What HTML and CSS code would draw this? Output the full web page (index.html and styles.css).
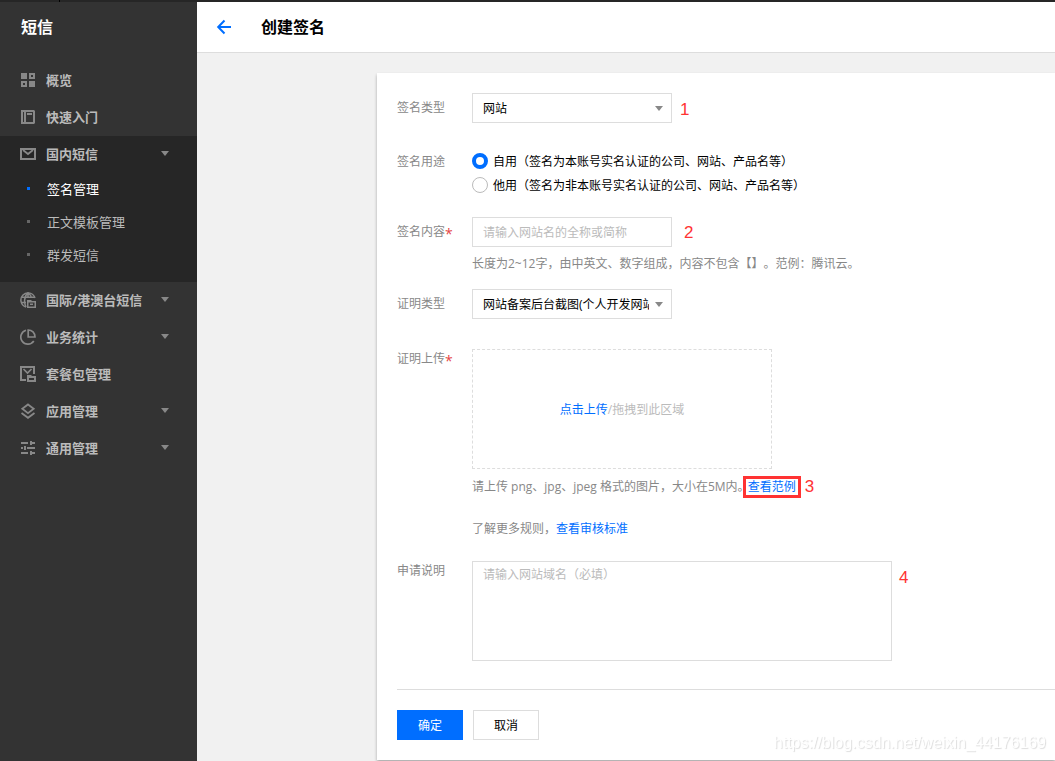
FILE: index.html
```html
<!DOCTYPE html>
<html lang="zh-CN">
<head>
<meta charset="utf-8">
<meta name="viewport" content="width=device-width, initial-scale=1">
<title>创建签名 - 短信</title>
<link rel="stylesheet" href="styles.css">
</head>
<body>
<div class="topbar"></div>
<div class="layout">
  <aside class="sidebar">
    <h2 class="sidebar-title">短信</h2>
    <nav>
      <ul class="menu">
        <li><a class="menu-item" href="#">
          <svg class="menu-icon" viewBox="0 0 16 16"><path fill="currentColor" fill-rule="evenodd" d="M1 1h6v6H1zM9 1h6v6H9zm2 2v2h2V3zM1 9h6v6H1zm2 2v2h2v-2zM9 9h6v6H9z"/></svg>
          <span class="menu-text">概览</span></a></li>
        <li><a class="menu-item" href="#">
          <svg class="menu-icon" viewBox="0 0 16 16"><path fill="currentColor" fill-rule="evenodd" d="M1 1h13l1 1v12l-1 1H1zM3 3v10h1V3zm3 0v10h7V3zM7 4h5v2H7z"/></svg>
          <span class="menu-text">快速入门</span></a></li>
        <li class="menu-group">
          <a class="menu-item" href="#">
            <svg class="menu-icon" viewBox="0 0 16 16"><path fill="currentColor" fill-rule="evenodd" d="M0 2h16v12H0zM2 4v8h12V4z"/><path d="M3 4l5 4 5-4" fill="none" stroke="currentColor" stroke-width="1.8"/></svg>
            <span class="menu-text">国内短信</span>
            <svg class="caret" viewBox="0 0 8 5"><path fill="currentColor" d="M0 0h8L4 5z"/></svg></a>
          <ul class="submenu">
            <li><a class="submenu-item active" href="#">签名管理</a></li>
            <li><a class="submenu-item" href="#">正文模板管理</a></li>
            <li><a class="submenu-item" href="#">群发短信</a></li>
          </ul>
        </li>
        <li><a class="menu-item" href="#">
          <svg class="menu-icon" viewBox="0 0 16 16"><g fill="none" stroke="currentColor" stroke-width="1.5"><path d="M15 6A7.200 7.200 0 1 0 6 15"/><path d="M6 15C3.800 11 4 4 8 .8c2 1.400 3 3 3.400 5M1.500 5.200h13M1 10.500h5M8 1v5"/></g><path fill="currentColor" fill-rule="evenodd" d="M7 8h4l1 1h4v7H7zM8.500 10.500v4h6v-4zM10 11.500h3V13h-3z"/></svg>
          <span class="menu-text">国际/港澳台短信</span>
          <svg class="caret" viewBox="0 0 8 5"><path fill="currentColor" d="M0 0h8L4 5z"/></svg></a></li>
        <li><a class="menu-item" href="#">
          <svg class="menu-icon" viewBox="0 0 16 16"><g fill="none" stroke="currentColor" stroke-width="1.7"><path d="M6 1.200A7.100 7.100 0 1 0 13.800 12"/><path d="M8.200 1v7h6.800C15 3.800 12 1 8.200 1z"/></g></svg>
          <span class="menu-text">业务统计</span>
          <svg class="caret" viewBox="0 0 8 5"><path fill="currentColor" d="M0 0h8L4 5z"/></svg></a></li>
        <li><a class="menu-item" href="#">
          <svg class="menu-icon" viewBox="0 0 16 16"><path fill="currentColor" fill-rule="evenodd" d="M0 0h15v8h-2V2H2v11h4v2H0zM7 9h4l1 1h4v6H7zM9 12v2h5v-2z"/><path d="M3.500 3l4 4 4-4" fill="none" stroke="currentColor" stroke-width="1.700"/></svg>
          <span class="menu-text">套餐包管理</span></a></li>
        <li><a class="menu-item" href="#">
          <svg class="menu-icon" viewBox="0 0 16 16"><g fill="none" stroke="currentColor" stroke-width="1.800"><path d="M8 1.500l5.700 4.300L8 10.200 2.300 5.800z"/><path d="M1.500 10L8 14.800l6.500-4.800"/></g></svg>
          <span class="menu-text">应用管理</span>
          <svg class="caret" viewBox="0 0 8 5"><path fill="currentColor" d="M0 0h8L4 5z"/></svg></a></li>
        <li><a class="menu-item" href="#">
          <svg class="menu-icon" viewBox="0 0 16 16"><path fill="currentColor" d="M1 2h7v2H1zM10 1h2v1h3v2h-3v1h-2zM1 7h2v2H1zM4 6h2v4H4zM7 7h8v2H7zM1 12h7v2H1zM10 11h2v1h3v2h-3v1h-2z"/></svg>
          <span class="menu-text">通用管理</span>
          <svg class="caret" viewBox="0 0 8 5"><path fill="currentColor" d="M0 0h8L4 5z"/></svg></a></li>
      </ul>
    </nav>
  </aside>

  <main class="main">
    <header class="page-header">
      <a class="back" href="#" aria-label="返回"><svg viewBox="0 0 16 16"><path d="M8.500 1.500L2.200 8l6.300 6.500M2 8h13" fill="none" stroke="currentColor" stroke-width="2"/></svg></a>
      <h1 class="page-title">创建签名</h1>
    </header>

    <form class="card">
      <div class="row row-type">
        <label class="label" for="sign-type">签名类型</label>
        <div class="inline">
          <div class="select-wrap">
            <select class="control" id="sign-type"><option>网站</option></select>
            <svg class="caret" viewBox="0 0 8 5"><path fill="currentColor" d="M0 0h8L4 5z"/></svg>
          </div>
          <span class="mark mark-type">1</span>
        </div>
      </div>

      <div class="row row-usage" role="radiogroup" aria-labelledby="usage-label">
        <span class="label" id="usage-label">签名用途</span>
        <div class="radios">
          <label class="radio"><input type="radio" name="usage" checked>自用（签名为本账号实名认证的公司、网站、产品名等）</label>
          <label class="radio"><input type="radio" name="usage">他用（签名为非本账号实名认证的公司、网站、产品名等）</label>
        </div>
      </div>

      <div class="row row-content">
        <label class="label" for="sign-content">签名内容<span class="required">*</span></label>
        <div class="field">
          <div class="inline">
            <input class="control" id="sign-content" type="text" placeholder="请输入网站名的全称或简称">
            <span class="mark mark-wide">2</span>
          </div>
          <p class="help">长度为2~12字，由中英文、数字组成，内容不包含【】。范例：腾讯云。</p>
        </div>
      </div>

      <div class="row row-proof">
        <label class="label" for="proof-type">证明类型</label>
        <div class="select-wrap">
          <select class="control" id="proof-type"><option>网站备案后台截图(个人开发网站)</option></select>
          <svg class="caret" viewBox="0 0 8 5"><path fill="currentColor" d="M0 0h8L4 5z"/></svg>
        </div>
      </div>

      <div class="row row-upload">
        <span class="label label-top">证明上传<span class="required">*</span></span>
        <div class="field">
          <div class="dropzone"><a class="link" href="#">点击上传</a>/拖拽到此区域</div>
          <p class="hint">请上传 png、jpg、jpeg 格式的图片，大小在5M内。<a class="link boxed" href="#">查看范例</a><span class="mark mark-hint">3</span></p>
          <p class="hint hint-rules">了解更多规则，<a class="link" href="#">查看审核标准</a></p>
        </div>
      </div>

      <div class="row">
        <label class="label label-top" for="remark">申请说明</label>
        <div class="inline inline-top">
          <textarea class="control remark" id="remark" placeholder="请输入网站域名（必填）"></textarea>
          <span class="mark mark-remark">4</span>
        </div>
      </div>

      <div class="actions">
        <button class="btn btn-primary" type="submit">确定</button>
        <button class="btn" type="button">取消</button>
      </div>
    </form>
  </main>
</div>
<div class="watermark">https://blog.csdn.net/weixin_44176169</div>
</body>
</html>
```
FILE: styles.css
```css
* {
  box-sizing: border-box;
}

body {
  display: flex;
  flex-direction: column;
  min-height: 100vh;
  margin: 0;
  background: #f1f1f1;
  color: #000;
  font-family: "Open Sans", "Noto Sans CJK SC", sans-serif;
  font-size: 12px;
  text-spacing-trim: space-all;
}

h1, h2, p, ul {
  margin: 0;
  padding: 0;
}

ul {
  list-style: none;
}

a {
  text-decoration: none;
}

svg {
  display: block;
}

.topbar {
  height: 2px;
  background: linear-gradient(90deg, #262626 59px, #000 59px, #000 60px, #262626 60px);
}

.layout {
  display: flex;
  flex: 1;
}

/* Sidebar */

.sidebar {
  flex: none;
  width: 197px;
  background: #333;
}

.sidebar-title {
  height: 60px;
  padding-left: 21px;
  color: #fff;
  font-size: 16px;
  line-height: 50px;
}

.menu-item {
  display: flex;
  align-items: center;
  height: 37px;
  padding: 0 28px 2px 20px;
  color: #888;
  font-size: 13px;
  font-weight: 700;
}

.menu-icon {
  flex: none;
  width: 16px;
  height: 16px;
  margin-right: 10px;
}

.menu-text {
  flex: 1;
  color: #bbb;
  white-space: nowrap;
}

.caret {
  flex: none;
  width: 8px;
  height: 5px;
}

.menu-group {
  padding-bottom: 10px;
  background: #262626;
}

.submenu-item {
  display: flex;
  align-items: center;
  gap: 17px;
  height: 33px;
  padding: 0 0 2px 27px;
  color: #bbb;
  font-size: 13px;
}

.submenu-item::before {
  width: 3px;
  height: 3px;
  background: #666;
  content: "";
}

.submenu-item.active {
  color: #fff;
}

.submenu-item.active::before {
  background: #006eff;
}

/* Page */

.main {
  display: flex;
  flex: 1;
  flex-direction: column;
  min-width: 0;
}

.page-header {
  display: flex;
  align-items: center;
  gap: 29px;
  height: 51px;
  padding-left: 19px;
  border-bottom: 1px solid #ddd;
  background: #fff;
}

.back {
  width: 16px;
  color: #006eff;
}

.page-title {
  font-size: 16px;
  line-height: 24px;
}

.card {
  margin: 20px 0 1px 180px;
  padding: 20px 0 20px 20px;
  background: #fff;
  box-shadow: 0 2px 3px rgba(0, 0, 0, 0.3);
}

/* Form */

.row {
  display: flex;
  align-items: flex-start;
}

.row-type {
  margin-bottom: 26px;
}

.row-usage {
  margin-bottom: 20px;
}

.row-content {
  margin-bottom: 16px;
}

.row-proof {
  margin-bottom: 30px;
}

.row-upload {
  margin-bottom: 22px;
}

.label {
  flex: none;
  width: 75px;
  color: #888;
  line-height: 30px;
}

.row-usage .label {
  line-height: 26px;
}

.label-top {
  line-height: 20px;
}

.required {
  color: #e54545;
  font-size: 14px;
  line-height: 1;
  vertical-align: -3px;
}

.inline {
  display: flex;
  align-items: center;
}

.inline-top {
  align-items: flex-start;
}

.control {
  display: block;
  width: 200px;
  height: 30px;
  margin: 0;
  padding: 0 10px;
  border: 1px solid #ddd;
  border-radius: 0;
  outline: none;
  background: #fff;
  color: #000;
  font: inherit;
  appearance: none;
}

.control::placeholder {
  color: #bbb;
  opacity: 1;
}

.select-wrap {
  position: relative;
}

.select-wrap .control {
  padding-right: 22px;
}

.select-wrap .caret {
  position: absolute;
  top: 13px;
  right: 9px;
  color: #888;
  pointer-events: none;
}

.mark {
  margin-left: 8px;
  color: #f33;
  font-family: "Liberation Sans", sans-serif;
  font-size: 17px;
  line-height: 20px;
}

.mark-type {
  padding-top: 4px;
}

.mark-wide {
  padding-top: 2px;
  margin-left: 12px;
}

.mark-hint {
  margin-left: 4px;
}

.mark-remark {
  margin: 7px 0 0 7px;
}

.radio {
  display: flex;
  align-items: center;
  gap: 5px;
  height: 24px;
}

.radio input {
  width: 16px;
  height: 16px;
  margin: 0;
  border: 1px solid #bbb;
  border-radius: 50%;
  background: #fff;
  appearance: none;
}

.radio input:checked {
  border: 4px solid #006eff;
}

.help {
  margin-top: 8px;
  color: #888;
  line-height: 18px;
}

.dropzone {
  display: flex;
  align-items: center;
  justify-content: center;
  width: 300px;
  height: 120px;
  border: 1px dashed #ddd;
  color: #bbb;
}

.link {
  color: #006eff;
}

.hint {
  display: flex;
  align-items: center;
  margin-top: 7px;
  color: #888;
  line-height: 20px;
}

.hint-rules {
  margin-top: 21px;
}

.boxed {
  margin-left: -7px;
  padding: 0 2px;
  border: 3px solid #f33;
  line-height: 16px;
}

.remark {
  width: 420px;
  height: 100px;
  padding: 4px 10px;
  line-height: 18px;
  resize: none;
}

.actions {
  display: flex;
  gap: 10px;
  margin-top: 28px;
  padding-top: 20px;
  border-top: 1px solid #ddd;
}

.btn {
  width: 66px;
  height: 30px;
  padding: 0;
  border: 1px solid #ddd;
  background: #fff;
  color: #000;
  font: inherit;
}

.btn-primary {
  border-color: #006eff;
  background: #006eff;
  color: #fff;
}

.watermark {
  position: fixed;
  right: 9px;
  bottom: 9px;
  color: #fff;
  font-family: "Liberation Sans", sans-serif;
  font-size: 16px;
  line-height: 18px;
  text-shadow: 1px 1px 1px #ddd;
}
```
